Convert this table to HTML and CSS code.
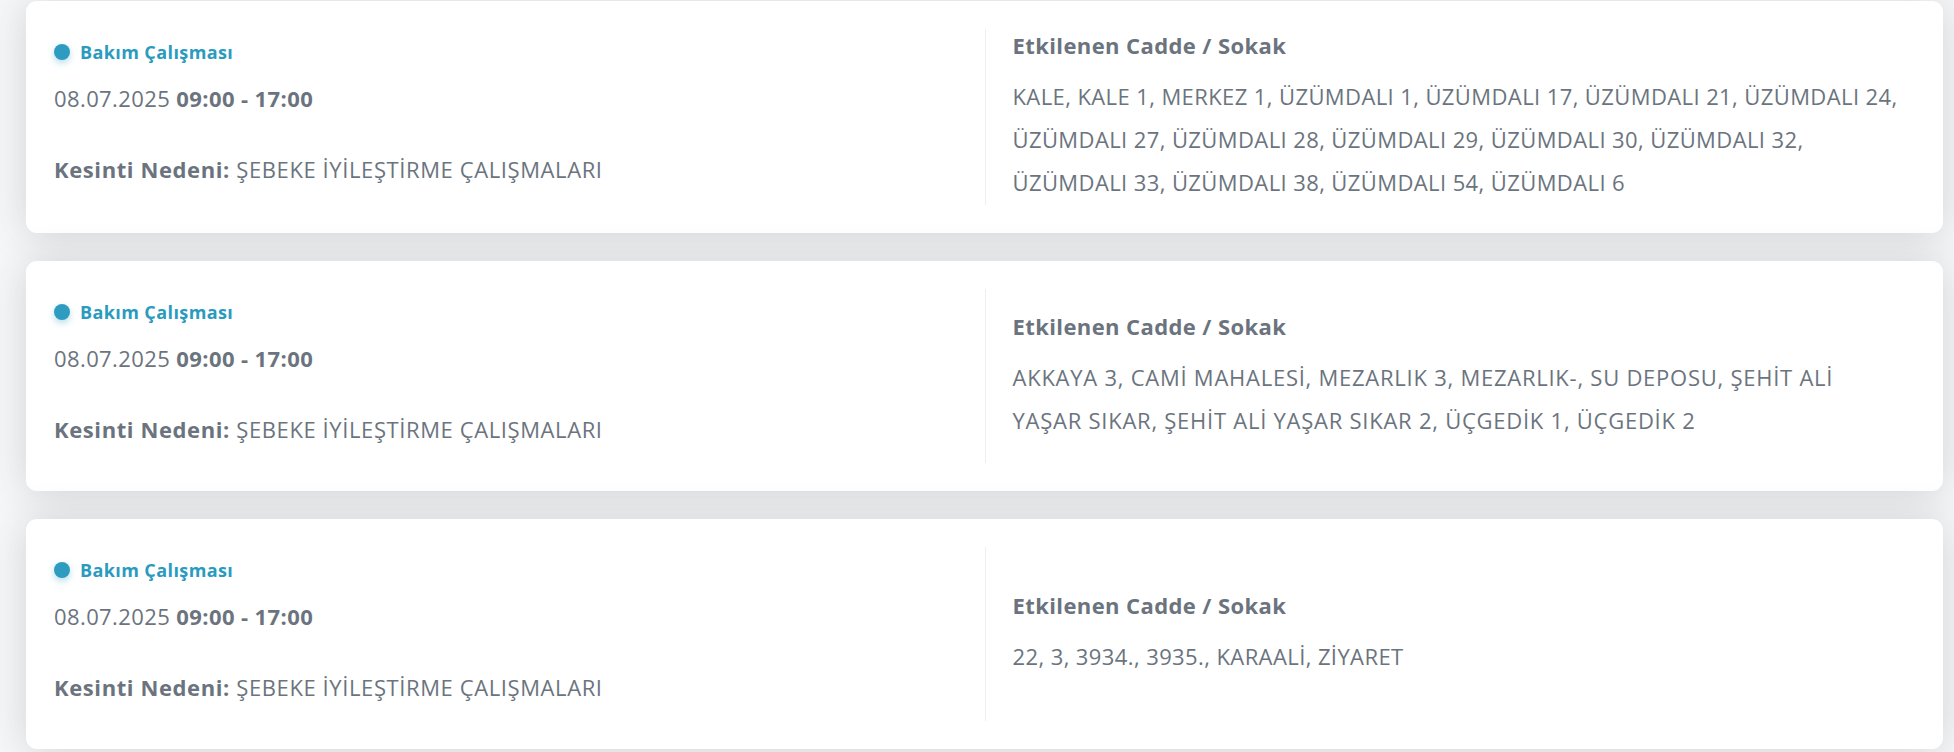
FILE: index.html
```html
<!DOCTYPE html>
<html lang="tr">
<head>
<meta charset="utf-8">
<title>Kesintiler</title>
<link rel="stylesheet" href="styles.css">
</head>
<body>
<div class="list">
  <div class="card">
    <div class="left">
      <div class="status"><span class="dot"></span>Bakım Çalışması</div>
      <div class="date">08.07.2025 <b>09:00 - 17:00</b></div>
      <div class="reason"><b>Kesinti Nedeni:</b> ŞEBEKE İYİLEŞTİRME ÇALIŞMALARI</div>
    </div>
    <div class="right">
      <div class="heading">Etkilenen Cadde / Sokak</div>
      <div class="streets">KALE, KALE 1, MERKEZ 1, ÜZÜMDALI 1, ÜZÜMDALI 17, ÜZÜMDALI 21, ÜZÜMDALI 24,<br>ÜZÜMDALI 27, ÜZÜMDALI 28, ÜZÜMDALI 29, ÜZÜMDALI 30, ÜZÜMDALI 32,<br>ÜZÜMDALI 33, ÜZÜMDALI 38, ÜZÜMDALI 54, ÜZÜMDALI 6</div>
    </div>
  </div>
  <div class="card">
    <div class="left">
      <div class="status"><span class="dot"></span>Bakım Çalışması</div>
      <div class="date">08.07.2025 <b>09:00 - 17:00</b></div>
      <div class="reason"><b>Kesinti Nedeni:</b> ŞEBEKE İYİLEŞTİRME ÇALIŞMALARI</div>
    </div>
    <div class="right">
      <div class="heading">Etkilenen Cadde / Sokak</div>
      <div class="streets wide">AKKAYA 3, CAMİ MAHALESİ, MEZARLIK 3, MEZARLIK-, SU DEPOSU, ŞEHİT ALİ<br>YAŞAR SIKAR, ŞEHİT ALİ YAŞAR SIKAR 2, ÜÇGEDİK 1, ÜÇGEDİK 2</div>
    </div>
  </div>
  <div class="card">
    <div class="left">
      <div class="status"><span class="dot"></span>Bakım Çalışması</div>
      <div class="date">08.07.2025 <b>09:00 - 17:00</b></div>
      <div class="reason"><b>Kesinti Nedeni:</b> ŞEBEKE İYİLEŞTİRME ÇALIŞMALARI</div>
    </div>
    <div class="right">
      <div class="heading">Etkilenen Cadde / Sokak</div>
      <div class="streets">22, 3, 3934., 3935., KARAALİ, ZİYARET</div>
    </div>
  </div>
</div>
</body>
</html>
```

FILE: styles.css
```css
html, body {
  margin: 0;
  padding: 0;
}

body {
  background: #f6f7f8;
  font-family: "Open Sans", "Noto Sans", sans-serif;
  color: #6b747e;
  height: 752px;
  overflow: hidden;
}

.list {
  padding: 1px 11px 0 26px;
  display: flex;
  flex-direction: column;
  gap: 28px;
}

.card {
  background: #ffffff;
  border-radius: 11px;
  box-shadow: 0 2px 40px rgba(40, 50, 60, 0.18);
  padding: 28px 28px;
  display: grid;
  grid-template-columns: 1fr 1fr;
  height: 174px;
}

.card:first-child {
  height: 176px;
}

.left {
  display: flex;
  flex-direction: column;
  letter-spacing: 0.4px;
}

.status {
  margin-top: 11px;
  height: 24px;
  line-height: 24px;
  font-size: 18px;
  font-weight: 700;
  color: #2a9bbf;
  display: flex;
  align-items: center;
}

.dot {
  width: 16px;
  height: 16px;
  border-radius: 50%;
  background: #2e9cc0;
  box-shadow: 0 3px 7px rgba(46, 156, 192, 0.35);
  margin-right: 10px;
  flex: none;
}

.date {
  margin-top: 22px;
  line-height: 24px;
  font-size: 22px;
}

.reason {
  margin-top: 47px;
  line-height: 24px;
  font-size: 22px;
  letter-spacing: 0.6px;
}

b {
  font-weight: 700;
}

.right {
  border-left: 1px solid #edeff1;
  padding-left: 27px;
  display: flex;
  flex-direction: column;
  justify-content: center;
  letter-spacing: 0.4px;
}

.heading {
  font-size: 22px;
  font-weight: 700;
  line-height: 30px;
  margin-bottom: 15px;
}

.streets {
  font-size: 22px;
  line-height: 43px;
  white-space: nowrap;
}

.streets.wide {
  letter-spacing: 0.75px;
}
```
